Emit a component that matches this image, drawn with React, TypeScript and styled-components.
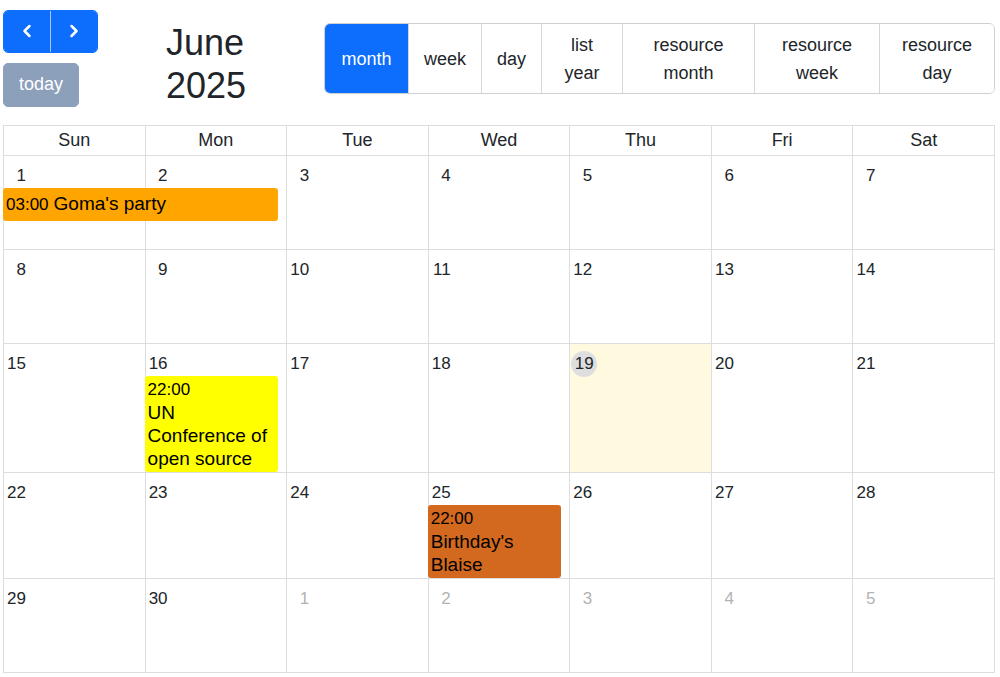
import styled, { createGlobalStyle } from 'styled-components';
import { ChevronLeft, ChevronRight } from 'lucide-react';

const GlobalStyle = createGlobalStyle`
  html, body {
    margin: 0;
    background: #fff;
  }
  body {
    font-family: 'Liberation Sans', Arial, sans-serif;
    color: #212529;
  }
  * {
    box-sizing: border-box;
  }
`;

const Page = styled.div`
  padding: 9px 5px 0 3px;
`;

const Toolbar = styled.div`
  display: flex;
  justify-content: space-between;
  align-items: center;
  margin-bottom: 18px;
`;

const NavColumn = styled.div`
  display: flex;
  flex-direction: column;
  align-items: flex-start;
  gap: 10px;
`;

const NavGroup = styled.div`
  display: flex;
  border: 1px solid #0d6efd;
  border-radius: 5px;
  overflow: hidden;
`;

const NavButton = styled.button`
  display: flex;
  align-items: center;
  justify-content: center;
  width: 46px;
  height: 41px;
  padding: 0;
  border: 0;
  background: #0d6efd;
  color: #fff;
  & + & {
    width: 47px;
    border-left: 1px solid #a9c8f7;
  }
`;

const TodayButton = styled.button`
  width: 76px;
  height: 44px;
  padding: 0;
  border: 1px solid #8c9fbb;
  border-radius: 5px;
  background: #8c9fbb;
  color: #fff;
  font-family: inherit;
  font-size: 18px;
`;

const Title = styled.h2`
  width: 90px;
  margin: 12px 0 0;
  font-size: 36px;
  font-weight: 400;
  line-height: 43px;
`;

const ViewGroup = styled.div`
  display: flex;
  border: 1px solid #cdd1d5;
  border-radius: 6px;
  overflow: hidden;
`;

const ViewButton = styled.button<{ $w: number; $active?: boolean }>`
  flex: none;
  display: flex;
  align-items: center;
  justify-content: center;
  width: ${(p) => p.$w}px;
  padding: 7px 12px 6px;
  border: 0;
  background: ${(p) => (p.$active ? '#0d6efd' : '#fff')};
  color: ${(p) => (p.$active ? '#fff' : '#212529')};
  font-family: inherit;
  font-size: 18px;
  line-height: 28px;
  text-align: center;
  & + & {
    border-left: 1px solid #d6d6d6;
  }
`;

const Grid = styled.div`
  border-top: 1px solid #ddd;
  border-left: 1px solid #ddd;
`;

const HeadRow = styled.div`
  display: grid;
  grid-template-columns: repeat(7, minmax(0, 1fr));
`;

const HeadCell = styled.div`
  height: 30px;
  line-height: 29px;
  font-size: 18px;
  text-align: center;
  border-right: 1px solid #ddd;
  border-bottom: 1px solid #ddd;
`;

// a week: top track holds the day numbers, the second the events
const Week = styled.div`
  display: grid;
  grid-template-columns: repeat(7, minmax(0, 1fr));
  grid-template-rows: 32px auto;
  min-height: 94px;
  border-bottom: 1px solid #ddd;
`;

const DayCell = styled.div<{ $col: number; $today?: boolean }>`
  grid-row: 1 / span 2;
  grid-column: ${(p) => p.$col};
  border-right: 1px solid #ddd;
  background: ${(p) => (p.$today ? '#fffadf' : 'transparent')};
`;

const DayNumber = styled.div<{ $col: number; $today?: boolean; $muted?: boolean }>`
  grid-row: 1;
  grid-column: ${(p) => p.$col};
  align-self: start;
  justify-self: start;
  width: 26px;
  height: 26px;
  margin: 7px 0 0 1px;
  padding-right: ${(p) => (p.$today ? 0 : 5)}px;
  border-radius: 50%;
  background: ${(p) => (p.$today ? '#dedede' : 'none')};
  color: ${(p) => (p.$muted ? '#b3b3b3' : '#212529')};
  font-size: 17px;
  line-height: 26px;
  text-align: ${(p) => (p.$today ? 'center' : 'right')};
`;

const EventBox = styled.div<{ $col: number; $span: number; $color: string; $inline?: boolean }>`
  grid-row: 2;
  grid-column: ${(p) => `${p.$col} / span ${p.$span}`};
  align-self: start;
  margin: 0 9px 0 -1px;
  padding: ${(p) => (p.$inline ? '4px 3px 5px' : '2px 3px')};
  border-radius: 3px;
  background: ${(p) => p.$color};
  color: #000;
  font-size: 19px;
  line-height: 23px;
`;

const EventTime = styled.span<{ $inline?: boolean }>`
  display: ${(p) => (p.$inline ? 'inline' : 'block')};
  margin-right: ${(p) => (p.$inline ? 5 : 0)}px;
  font-size: 17px;
`;

type Day = { n: number; muted?: boolean; today?: boolean };
type CalEvent = { col: number; span: number; time: string; title: string; color: string; inline?: boolean };
type WeekData = { days: Day[]; events: CalEvent[] };

const range = (from: number, to: number, muted = false): Day[] =>
  Array.from({ length: to - from + 1 }, (_, i) => ({ n: from + i, muted }));

const weeks: WeekData[] = [
  {
    days: range(1, 7),
    events: [{ col: 1, span: 2, time: '03:00', title: "Goma's party", color: '#ffa500', inline: true }],
  },
  { days: range(8, 14), events: [] },
  {
    days: range(15, 21).map((d) => (d.n === 19 ? { ...d, today: true } : d)),
    events: [{ col: 2, span: 1, time: '22:00', title: 'UN Conference of open source', color: '#ffff00' }],
  },
  {
    days: range(22, 28),
    events: [{ col: 4, span: 1, time: '22:00', title: "Birthday's Blaise", color: '#d2691e' }],
  },
  { days: [...range(29, 30), ...range(1, 5, true)], events: [] },
];

const dayNames = ['Sun', 'Mon', 'Tue', 'Wed', 'Thu', 'Fri', 'Sat'];

const views = [
  { label: 'month', w: 83, active: true },
  { label: 'week', w: 73 },
  { label: 'day', w: 60 },
  { label: 'list year', w: 81 },
  { label: 'resource month', w: 132 },
  { label: 'resource week', w: 125 },
  { label: 'resource day', w: 115 },
];

const App = () => {
  return (
    <Page>
      <GlobalStyle />
      <Toolbar>
        <NavColumn>
          <NavGroup>
            <NavButton aria-label="prev">
              <ChevronLeft size={20} strokeWidth={3} />
            </NavButton>
            <NavButton aria-label="next">
              <ChevronRight size={20} strokeWidth={3} />
            </NavButton>
          </NavGroup>
          <TodayButton>today</TodayButton>
        </NavColumn>
        <Title>June 2025</Title>
        <ViewGroup>
          {views.map((v) => (
            <ViewButton key={v.label} $w={v.w} $active={v.active}>
              {v.label}
            </ViewButton>
          ))}
        </ViewGroup>
      </Toolbar>

      <Grid>
        <HeadRow>
          {dayNames.map((d) => (
            <HeadCell key={d}>{d}</HeadCell>
          ))}
        </HeadRow>
        {weeks.map((week, wi) => (
          <Week key={wi}>
            {week.days.map((d, i) => (
              <DayCell key={`c${i}`} $col={i + 1} $today={d.today} />
            ))}
            {week.days.map((d, i) => (
              <DayNumber key={`n${i}`} $col={i + 1} $today={d.today} $muted={d.muted}>
                {d.n}
              </DayNumber>
            ))}
            {week.events.map((e) => (
              <EventBox key={e.title} $col={e.col} $span={e.span} $color={e.color} $inline={e.inline}>
                <EventTime $inline={e.inline}>{e.time}</EventTime>
                {e.title}
              </EventBox>
            ))}
          </Week>
        ))}
      </Grid>
    </Page>
  );
};

export default App;
